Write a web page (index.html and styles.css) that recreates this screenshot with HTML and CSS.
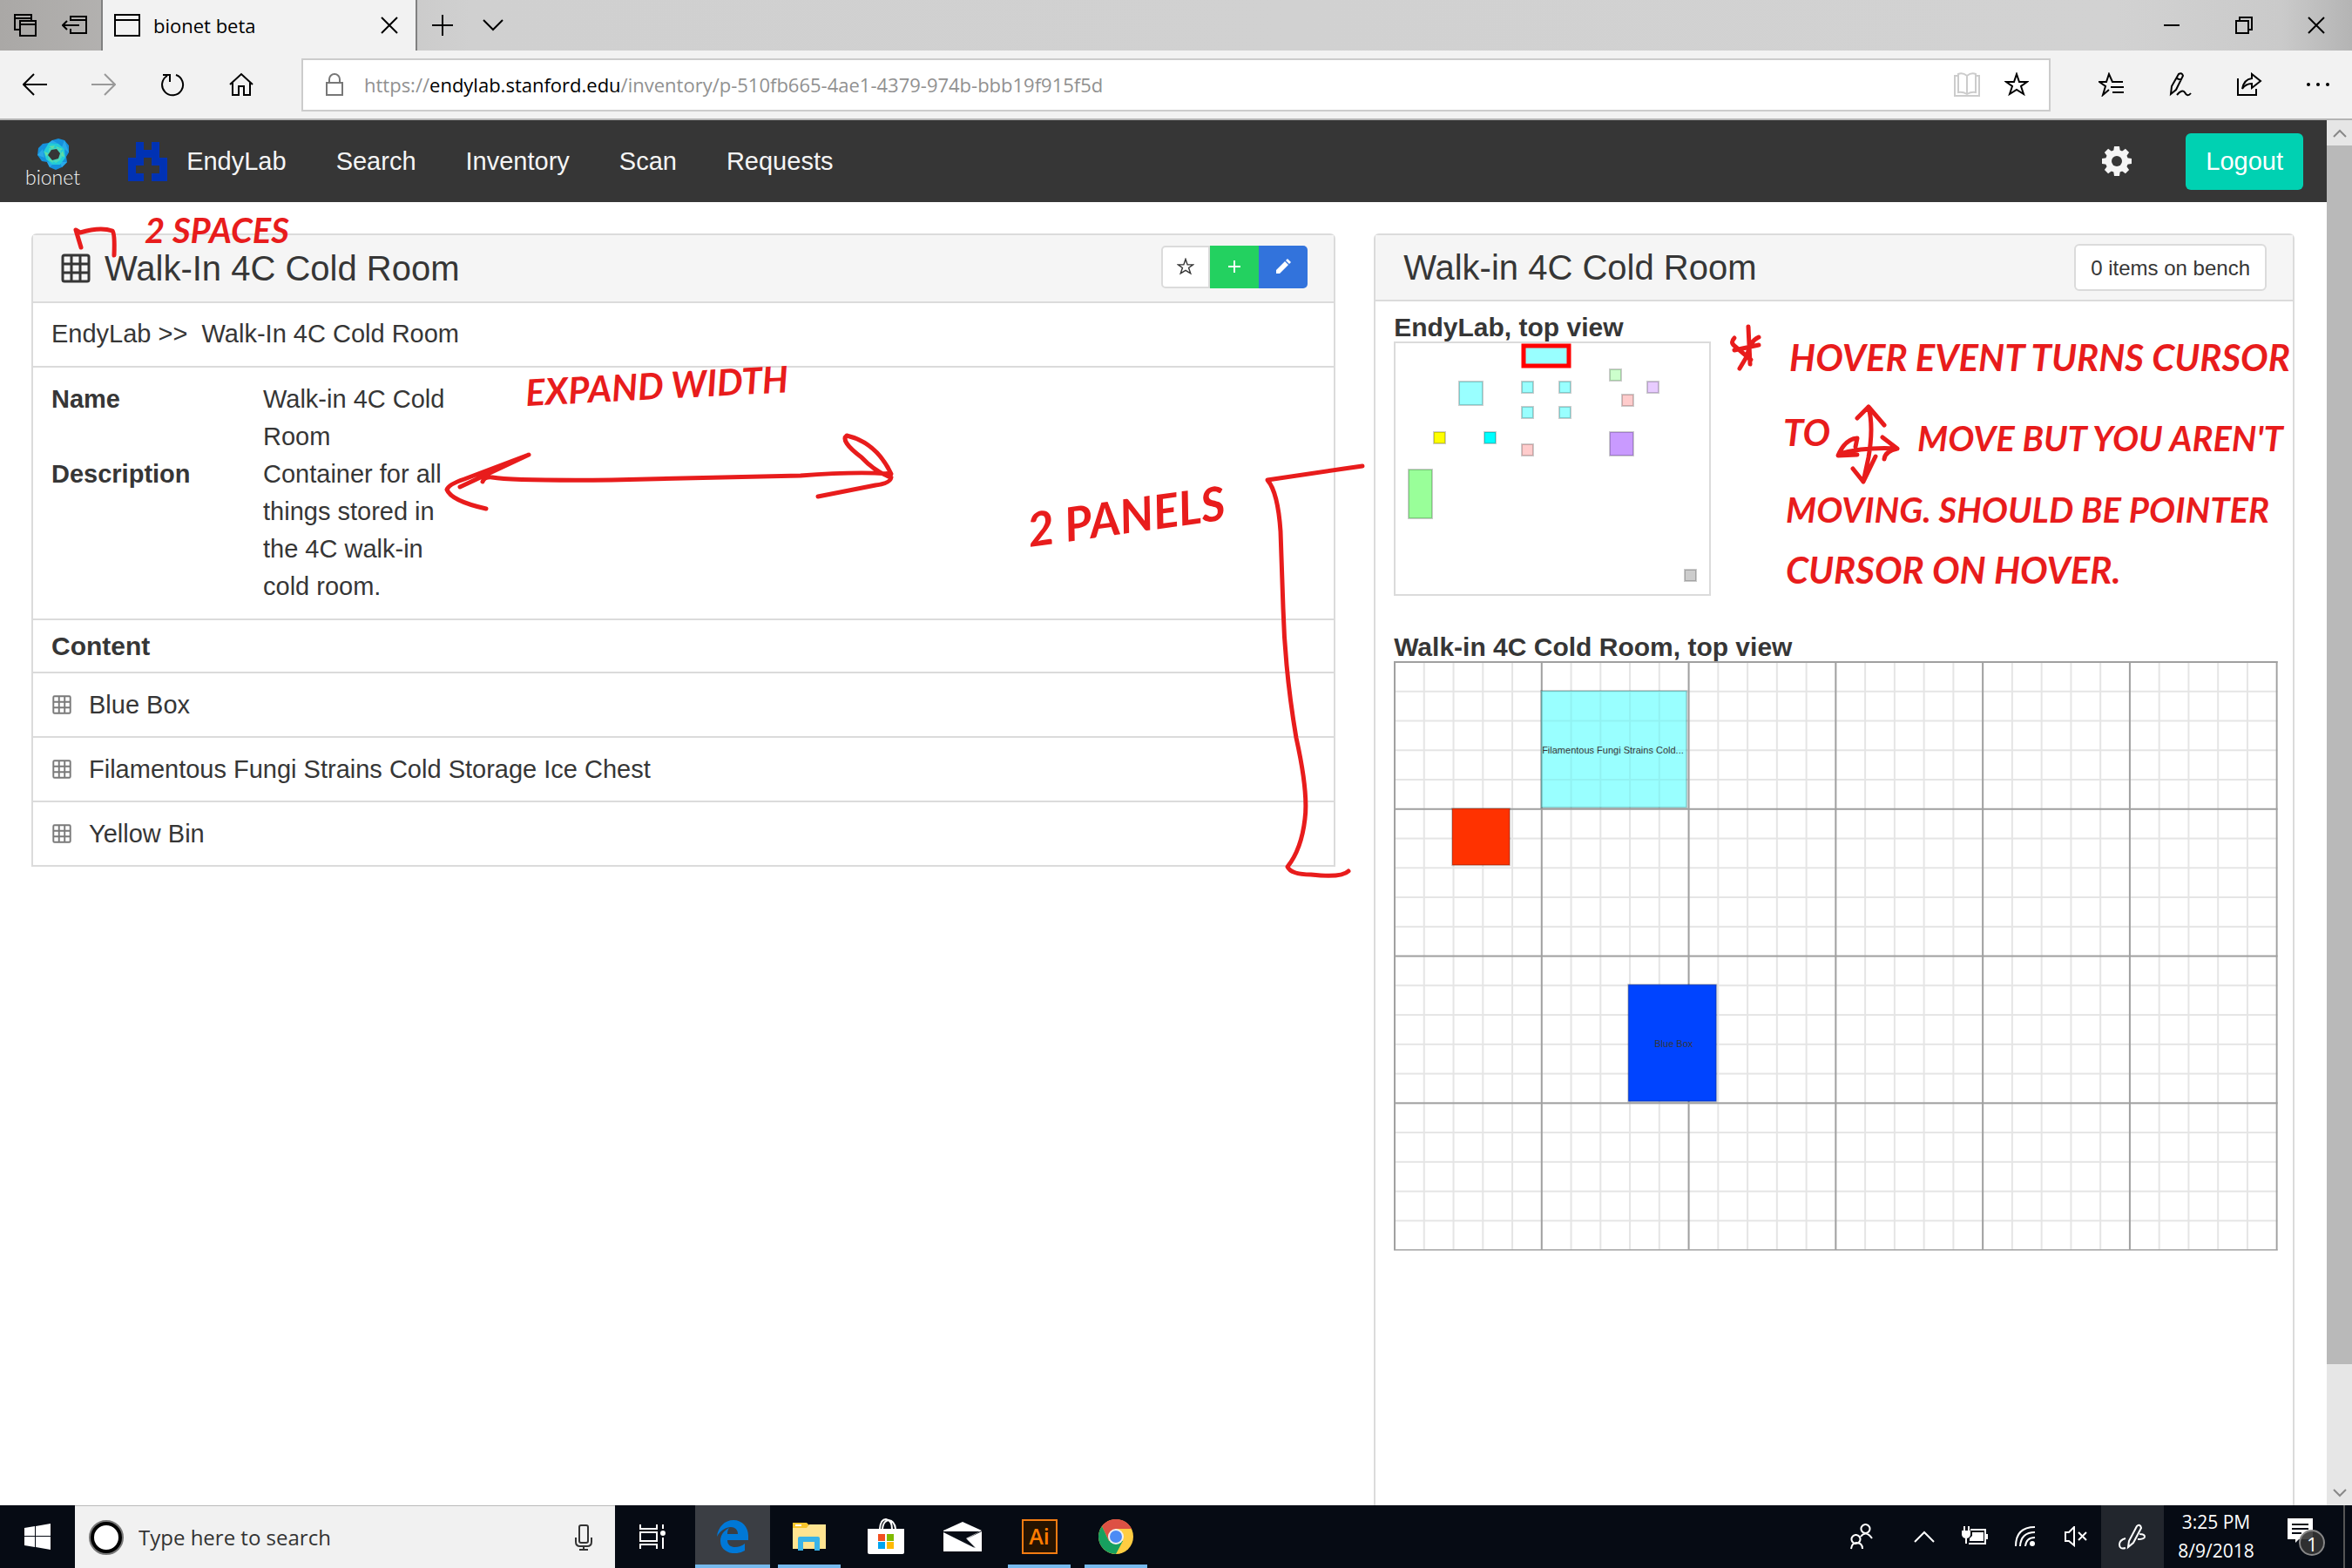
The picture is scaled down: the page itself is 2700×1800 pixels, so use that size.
FILE: index.html
```html
<!DOCTYPE html>
<html lang="en">
<head>
<meta charset="utf-8">
<title>bionet beta</title>
<link rel="stylesheet" href="styles.css">
</head>
<body>
<svg class="defs" aria-hidden="true">
  <symbol id="grid" viewBox="0 0 34 34"><path fill="none" stroke="currentColor" stroke-width="3" d="M4 2H30Q32 2 32 4V30Q32 32 30 32H4Q2 32 2 30V4Q2 2 4 2ZM12 2V32M22 2V32M2 12H32M2 22H32"/></symbol>
  <symbol id="star" viewBox="0 0 28 28"><path fill="none" stroke="currentColor" stroke-width="2" d="M14 2L17 11H26L19 16L22 25L14 20L6 25L9 16L2 11H11Z"/></symbol>
</svg>

<header class="tabs">
  <div class="tab-tools">
    <button class="bare" aria-label="Tabs set aside"><svg width="28" height="28"><path class="ln" d="M7 19H2V2H21V8M2 6H21M8 9H26V26H8ZM8 13H26"/></svg></button>
    <button class="bare" aria-label="Set tabs aside"><svg width="30" height="28"><path class="ln" d="M10 9V4H28V23H10V18M10 8H28M20 14H1M6 9L1 14L6 19"/></svg></button>
  </div>
  <div class="tab">
    <svg width="30" height="26"><path class="ln" d="M1 1H29V25H1ZM1 7H29"/></svg>
    <span class="tab-title">bionet beta</span>
    <button class="bare" aria-label="Close tab"><svg width="20" height="20"><path class="ln" d="M1 1L19 19M19 1L1 19"/></svg></button>
  </div>
  <button class="bare tab-add" aria-label="New tab"><svg width="24" height="24"><path class="ln" d="M12 0V24M0 12H24"/></svg></button>
  <button class="bare tab-add" aria-label="Tab previews"><svg width="24" height="14"><path class="ln" d="M1 1L12 12L23 1"/></svg></button>
  <div class="window-controls">
    <button class="bare" aria-label="Minimize"><svg width="20" height="20"><path class="ln" d="M1 10H19"/></svg></button>
    <button class="bare" aria-label="Restore"><svg width="20" height="20"><path class="ln" d="M1 5H15V19H1ZM5 5V1H19V15H15"/></svg></button>
    <button class="bare" aria-label="Close"><svg width="20" height="20"><path class="ln" d="M1 1L19 19M19 1L1 19"/></svg></button>
  </div>
</header>

<div class="toolbar">
  <button class="tool" aria-label="Back"><svg width="28" height="26"><path class="ln" d="M28 13H2M13 1L1 13L13 25"/></svg></button>
  <button class="tool dim" aria-label="Forward"><svg width="28" height="26"><path class="ln" d="M0 13H26M15 1L27 13L15 25"/></svg></button>
  <button class="tool" aria-label="Refresh"><svg width="28" height="28"><path class="ln" d="M18 3A12 12 0 1 1 8 4M3 3H11V11"/></svg></button>
  <button class="tool" aria-label="Home"><svg width="28" height="28"><path class="ln" d="M1 14L14 2L27 14M4 12V26H11V16H17V26H24V12"/></svg></button>
  <div class="address">
    <svg width="20" height="26"><path class="ln" stroke="#777" d="M1 11H19V25H1ZM4 11V7A6 6 0 0 1 16 7V11"/></svg>
    <a class="url" href="#">https://<b>endylab.stanford.edu</b>/inventory/p-510fb665-4ae1-4379-974b-bbb19f915f5d</a>
    <button class="addr-btn pale" aria-label="Reading view"><svg width="30" height="28"><path class="ln" d="M15 4Q10 0 5 2V23Q10 22 15 25Q20 22 25 23V2Q20 0 15 4V25M5 4H1V27H29V4H25"/></svg></button>
    <button class="addr-btn" aria-label="Add to favorites"><svg width="28" height="28"><use href="#star"/></svg></button>
  </div>
  <button class="tool" aria-label="Favorites"><svg width="30" height="28"><path class="ln" d="M28 11H16L12 2L9 11H1L8 16L5 26L12 20M14 17H29M16 23H29"/></svg></button>
  <button class="tool" aria-label="Add notes"><svg width="30" height="28"><path class="ln" d="M4 25L5 16L13 2Q17 0 18 4L10 20ZM11 7L16 9M11 26Q17 19 20 23Q23 29 27 24"/></svg></button>
  <button class="tool" aria-label="Share"><svg width="30" height="28"><path class="ln" d="M2 7V26H23V19M7 19Q9 8 18 7V2L28 10L18 18V13Q11 13 7 19Z"/></svg></button>
  <button class="tool" aria-label="More"><svg width="28" height="6"><circle cx="3" cy="3" r="2"/><circle cx="14" cy="3" r="2"/><circle cx="25" cy="3" r="2"/></svg></button>
</div>

<div class="viewport">
  <div class="page">
    <nav class="navbar">
      <a class="brand" href="#"><svg width="38" height="36" viewBox="0 0 38 36" aria-hidden="true">
        <path fill="#1590dc" d="M18 2L25 0L32 2L37 8L37 16L34 21L35 27L29 33L22 36L15 33L12 27L6 26L1 19L2 11L7 6L14 5Z"/>
        <path fill="#2aa9e8" d="M18 2L25 6L14 5ZM32 2L37 16L29 10ZM1 19L7 12L9 22ZM12 27L20 28L15 33ZM29 33L27 27L35 27Z"/>
        <path fill="#22cbd8" d="M14 5L25 6L32 12L33 22L27 30L18 30L11 24L8 15Z"/>
        <path fill="#5fdca4" d="M14 9L21 8L19 12ZM22 9L30 12L26 15ZM30 14L32 21L26 20ZM28 24L22 28L23 23ZM19 28L13 24L17 22ZM11 21L9 15L14 17Z"/>
        <path fill="#45d8bd" d="M14 11L27 11L29 22L22 28L13 23Z"/>
        <path fill="#363636" d="M17 13L23 12L27 17L25 23L18 25L13 19Z"/></svg>
        <span>bionet</span></a>
      <a class="nav-link lab" href="#"><svg width="45" height="45" viewBox="0 0 5 5" shape-rendering="crispEdges"><path fill="#0032b4" d="M1 0H2V1H3V0H4V2H5V5H3V4H4V3H1V4H2V5H0V2H1ZM2 2V3H3V2Z" fill-rule="evenodd"/></svg>EndyLab</a>
      <a class="nav-link" href="#">Search</a>
      <a class="nav-link" href="#">Inventory</a>
      <a class="nav-link" href="#">Scan</a>
      <a class="nav-link" href="#">Requests</a>
      <div class="nav-end">
        <button class="bare" aria-label="Settings"><svg width="36" height="36" viewBox="-18 -18 36 36"><g fill="#f5f5f5"><path id="t" d="M-4 -10L-3 -17H3L4 -10V10L3 17H-3L-4 10Z"/><use href="#t" transform="rotate(45)"/><use href="#t" transform="rotate(90)"/><use href="#t" transform="rotate(135)"/><circle r="13"/></g><circle r="6" fill="#363636"/></svg></button>
        <button class="logout">Logout</button>
      </div>
    </nav>

    <main class="columns">
      <section class="panel">
        <div class="panel-head">
          <h1 class="title"><svg width="34" height="34"><use href="#grid"/></svg>Walk-In 4C Cold Room</h1>
          <div class="actions">
            <button class="act" aria-label="Favorite"><svg width="20" height="20" viewBox="0 0 28 28"><use href="#star"/></svg></button>
            <button class="act green" aria-label="Add"><svg width="14" height="14"><path stroke="#fff" stroke-width="2" d="M7 0V14M0 7H14"/></svg></button>
            <button class="act blue" aria-label="Edit"><svg width="18" height="18"><path fill="#fff" d="M1 13L11 3L15 7L5 17H1ZM12 2L14 0L18 4L16 6Z"/></svg></button>
          </div>
        </div>
        <div class="crumbs"><a href="#">EndyLab</a> &gt;&gt; &nbsp;<a href="#">Walk-In 4C Cold Room</a></div>
        <dl class="facts">
          <dt>Name</dt><dd>Walk-in 4C Cold Room</dd>
          <dt>Description</dt><dd>Container for all things stored in the 4C walk-in cold room.</dd>
        </dl>
        <h2 class="subhead">Content</h2>
        <a class="item" href="#"><svg width="22" height="22"><use href="#grid"/></svg>Blue Box</a>
        <a class="item" href="#"><svg width="22" height="22"><use href="#grid"/></svg>Filamentous Fungi Strains Cold Storage Ice Chest</a>
        <a class="item" href="#"><svg width="22" height="22"><use href="#grid"/></svg>Yellow Bin</a>
      </section>

      <section class="panel tall">
        <div class="panel-head low">
          <h1 class="title">Walk-in 4C Cold Room</h1>
          <button class="bench">0 items on bench</button>
        </div>
        <div class="maps">
          <h2 class="map-title">EndyLab, top view</h2>
          <svg class="map" width="364" height="292" viewBox="0 0 364 292">
            <rect x="1" y="1" width="362" height="290" fill="#fff" stroke="#dbdbdb" stroke-width="2"/>
            <g stroke="#000" stroke-opacity=".2" stroke-width="2">
              <g fill="#9ff"><rect x="75" y="46" width="27" height="27"/><rect x="147" y="46" width="13" height="13"/><rect x="190" y="46" width="13" height="13"/><rect x="147" y="75" width="13" height="13"/><rect x="190" y="75" width="13" height="13"/></g>
              <rect x="248" y="32" width="13" height="13" fill="#cfc"/>
              <rect x="291" y="46" width="13" height="13" fill="#e8ccff"/>
              <rect x="262" y="61" width="13" height="13" fill="#fcc"/>
              <rect x="147" y="118" width="13" height="13" fill="#fcc"/>
              <rect x="46" y="104" width="13" height="13" fill="#ff0"/>
              <rect x="104" y="104" width="13" height="13" fill="#0ff"/>
              <rect x="248" y="104" width="27" height="27" fill="#c99aff"/>
              <rect x="17" y="147" width="27" height="56" fill="#9f9"/>
              <rect x="334" y="262" width="13" height="13" fill="#ccc"/>
            </g>
            <rect x="149" y="5" width="52" height="23" fill="#9ff" stroke="#f00" stroke-width="5"/>
          </svg>
          <h2 class="map-title">Walk-in 4C Cold Room, top view</h2>
          <svg class="room" viewBox="0 0 1014 676">
            <defs>
              <pattern id="minor" width="33.73" height="33.73" patternUnits="userSpaceOnUse"><path d="M0 1H34M1 0V34" stroke="#000" stroke-opacity=".1" stroke-width="2"/></pattern>
              <pattern id="major" width="168.65" height="168.65" patternUnits="userSpaceOnUse"><path d="M0 1H169M1 0V169" stroke="#000" stroke-opacity=".3" stroke-width="2"/></pattern>
            </defs>
            <rect x="169" y="34" width="167" height="134" fill="#9ff"/>
            <rect width="1014" height="676" fill="url(#minor)"/>
            <rect width="1014" height="676" fill="url(#major)"/>
            <g stroke="#000" stroke-opacity=".2" stroke-width="2">
              <rect x="169" y="34" width="167" height="134" fill="#9ff" fill-opacity=".5"/>
              <rect x="67" y="169" width="66" height="65" fill="#ff3200"/>
              <rect x="269" y="371" width="101" height="134" fill="#0044ff"/>
            </g>
            <g class="room-label"><text x="170" y="106">Filamentous Fungi Strains Cold...</text><text x="299" y="443">Blue Box</text></g>
          </svg>
        </div>
      </section>
    </main>
  </div>
  <div class="scrollbar" aria-hidden="true">
    <span class="arrow"><svg width="16" height="10"><path class="ln" stroke="#888" d="M1 9L8 2L15 9"/></svg></span>
    <span class="thumb"></span>
    <span class="arrow last"><svg width="16" height="10"><path class="ln" stroke="#888" d="M1 1L8 8L15 1"/></svg></span>
  </div>
</div>

<footer class="taskbar">
  <button class="start" aria-label="Start"><svg width="30" height="30"><path fill="#fff" d="M0 5L12 3V14H0ZM13 3L30 0V14H13ZM0 15H12V27L0 25ZM13 15H30V30L13 27Z"/></svg></button>
  <label class="search">
    <svg width="40" height="40"><circle cx="20" cy="20" r="18" fill="none" stroke="#777" stroke-width="4"/><circle cx="20" cy="20" r="16" fill="#fff" stroke="#000" stroke-width="4"/></svg>
    <input type="text" placeholder="Type here to search" aria-label="Search">
    <svg width="20" height="30"><path class="ln" stroke="#333" d="M5 3Q5 1 7 1H13Q15 1 15 3V19Q15 21 13 21H7Q5 21 5 19ZM1 15V20Q1 25 6 25H14Q19 25 19 20V15M10 25V29M5 29H15"/></svg>
  </label>
  <button class="task" aria-label="Task view"><svg width="30" height="28"><path class="ln wt" d="M1 0V5H20V0M1 9H20V19H1ZM1 28V23H20V28M27 0V5M27 15V28"/><circle cx="27" cy="10" r="3" fill="#fff"/></svg></button>
  <button class="task open current" aria-label="Edge"><svg width="36" height="38"><path fill="#0078d7" d="M0 19C1 8 9 0 19 0C29 0 36 8 36 18V23H12C12 33 25 33 32 27V35C20 42 4 37 4 24C4 17 8 12 14 9C12 12 12 14 12 16H24C24 5 8 5 0 19Z"/></svg></button>
  <button class="task open" aria-label="File Explorer"><svg width="38" height="32"><path fill="#f8c52c" d="M0 0H16L19 3V8H0Z"/><path fill="#fff" d="M3 2H10V4H3Z"/><path fill="#ffe491" d="M0 6H16L19 2H38V30H0Z"/><path fill="#39b3e8" d="M6 18Q6 16 8 16H29Q31 16 31 18V32H25V22H12V32H6Z"/></svg></button>
  <button class="task" aria-label="Store"><svg width="42" height="42"><path class="ln wt" d="M14 12Q15 1 21 1Q28 2 28 12M17 12Q18 3 24 2Q31 3 32 12"/><path fill="#fff" d="M0 12H42V39Q42 41 40 41H2Q0 41 0 39Z"/><path fill="#f25022" d="M12 18H20V26H12Z"/><path fill="#7fba00" d="M22 18H30V26H22Z"/><path fill="#00a4ef" d="M12 27H20V35H12Z"/><path fill="#ffb900" d="M22 27H30V35H22Z"/></svg></button>
  <button class="task" aria-label="Mail"><svg width="44" height="34"><path fill="#fff" d="M0 10L22 0L44 10L26 20L36 29L3 11H0ZM0 12L36 30L26 20L44 11V34H0Z"/><path fill="#060b14" d="M2 11H42L26 19L37 30Z"/></svg></button>
  <button class="task open" aria-label="Illustrator"><span class="ai">Ai</span></button>
  <button class="task open" aria-label="Chrome"><svg width="40" height="40" viewBox="-20 -20 40 40"><circle r="20" fill="#ffcd42"/><path fill="#dd5144" d="M-16 -12A20 20 0 0 1 18 -9H0L-8 5Z"/><path fill="#17a05f" d="M-16 -12A20 20 0 0 0 0 20L8 5L-8 5Z"/><circle r="9" fill="#f1f1f1"/><circle r="7" fill="#4c8bf5"/></svg></button>
  <div class="tray">
    <button class="tray-btn wide" aria-label="People"><svg width="26" height="30"><path class="ln wt" d="M18 1A5 5 0 1 1 17 1ZM12 15Q18 7 25 17M7 13A5 5 0 1 1 6 13ZM1 29Q2 22 7 22Q14 22 14 29"/></svg></button>
    <button class="tray-btn" aria-label="Hidden icons"><svg width="24" height="14"><path class="ln wt" d="M1 13L12 2L23 13"/></svg></button>
    <button class="tray-btn" aria-label="Battery"><svg width="30" height="24"><path class="ln wt" d="M10 4H27V20H8M29 9V15M3 0V5M8 0V5M5 14V20"/><path fill="#fff" d="M0 5H10V10Q9 14 5 14Q1 14 0 10ZM12 7H25V17H9V14L12 11Z"/></svg></button>
    <button class="tray-btn" aria-label="Network"><svg width="24" height="24"><path class="ln wt" d="M1 23Q1 1 23 1M6 23Q7 7 23 7M12 23Q13 13 23 13"/><circle cx="20" cy="20" r="3" fill="#fff"/></svg></button>
    <button class="tray-btn" aria-label="Volume"><svg width="26" height="24"><path class="ln wt" d="M1 7H5L11 1V22L5 17H1ZM16 7L25 16M25 7L16 16"/></svg></button>
    <button class="tray-btn ink" aria-label="Windows Ink"><svg width="32" height="30"><path class="ln wt" d="M11 27L12 20L21 3Q25 0 26 5L17 22ZM8 17Q1 19 1 24Q1 30 8 28M24 12Q30 12 30 15Q30 18 22 18"/></svg></button>
    <div class="clock"><time>3:25 PM</time><time>8/9/2018</time></div>
    <button class="notices" aria-label="Notifications"><svg width="46" height="46"><path fill="#fff" d="M0 2H29V26H13L9 30V26H0Z"/><path stroke="#060b14" stroke-width="2" d="M5 9H24M5 14H24M5 19H16"/><circle cx="28" cy="30" r="14" fill="#333" fill-opacity=".9" stroke="#888" stroke-width="2"/></svg><span class="count">1</span></button>
  </div>
</footer>

<svg class="markup" width="2700" height="1800">
  <g class="ink-line">
    <path d="M93 284L87 264L92 267Q115 260 129 265Q132 268 131 293"/>
    <path d="M558 584Q518 575 513 562Q515 556 533 550L607 522L528 559M554 553Q556 547 565 548Q590 552 702 551L919 546Q982 541 1023 544Q1006 508 972 500Q964 506 989 525Q1005 542 1023 548Q1022 555 1005 557L939 570"/>
    <path d="M1564 535L1543 538L1455 551Q1467 565 1470 610L1473 698Q1475 770 1488 847Q1502 910 1498 940Q1494 975 1478 995Q1482 1004 1505 1004Q1540 1008 1548 1000"/>
    <path d="M2007 375L2009 418M1991 388Q1986 393 1991 397L2010 413M2019 387Q2008 392 2006 408L1997 423M2019 396L1991 402"/>
    <path d="M2145 467Q2151 490 2145 525L2139 553M2132 480L2145 467L2163 488M2127 538L2139 553L2153 524M2112 521Q2140 513 2178 515M2132 522L2110 523Q2118 504 2132 503L2130 513M2161 502L2178 515Q2164 518 2163 527"/>
  </g>
  <g class="ink-text">
    <text class="small" x="166" y="279">2 SPACES</text>
    <text x="604" y="466" transform="rotate(-3 604 466)">EXPAND WIDTH</text>
    <text class="large" x="1182" y="628" transform="rotate(-8 1182 628)">2 PANELS</text>
    <text x="2054" y="426">HOVER EVENT TURNS CURSOR</text>
    <text x="2047" y="512">TO</text>
    <text class="small" x="2201" y="518">MOVE BUT YOU AREN'T</text>
    <text class="small" x="2050" y="600">MOVING. SHOULD BE POINTER</text>
    <text x="2050" y="670">CURSOR ON HOVER.</text>
  </g>
</svg>
</body>
</html>
```
FILE: styles.css
```css
* { box-sizing: border-box; }
body {
  margin: 0;
  height: 100vh;
  display: flex;
  flex-direction: column;
  overflow: hidden;
  position: relative;
  background: #fff;
  color: #363636;
  font: 29px/43px "Liberation Sans", Arial, sans-serif;
}
a { color: inherit; text-decoration: none; }
button { font: inherit; color: inherit; border: 0; padding: 0; background: none; display: flex; align-items: center; justify-content: center; }
h1, h2, dl, dd { margin: 0; }
svg { display: block; flex: none; }
.defs { position: absolute; width: 0; height: 0; }
.ln { fill: none; stroke: currentColor; stroke-width: 2; }
.ln[stroke="#777"] { stroke: #777; }
.ln[stroke="#888"] { stroke: #888; }
.ln[stroke="#333"] { stroke: #333; }
.ln.wt { stroke: #fff; }

.tabs {
  flex: none;
  display: flex;
  align-items: center;
  height: 58px;
  color: #000;
  background: linear-gradient(90deg, #aaa8a6, #d0d0d0 20%, #d2d2d2 90%, #cacaca 97%, #b4b4b4);
}
.tab-tools { width: 116px; display: flex; justify-content: space-between; padding: 0 15px; }
.tab {
  width: 363px;
  align-self: stretch;
  display: flex;
  align-items: center;
  padding: 0 20px 0 13px;
  background: #f2f2f2;
  border: solid #808080;
  border-width: 0 2px;
}
.tab-title { flex: 1; margin-left: 15px; font: 22px/30px "Open Sans", sans-serif; }
.tab-add { width: 58px; }
.window-controls { margin-left: auto; display: flex; }
.window-controls button { width: 83px; }

.toolbar {
  flex: none;
  display: flex;
  align-items: center;
  height: 80px;
  color: #000;
  background: #f2f2f2;
  border-bottom: 2px solid #b4b4b4;
}
.tool { width: 79px; height: 60px; }
.tool.dim { color: #999; }
.address {
  flex: 1;
  display: flex;
  align-items: center;
  height: 61px;
  margin: 0 30px;
  padding: 0 9px 0 26px;
  background: #fff;
  border: 2px solid #ccc;
}
.url { flex: 1; margin-left: 24px; font: 22px/32px "Open Sans", sans-serif; color: #919191; }
.url b { font-weight: 400; color: #000; }
.addr-btn { width: 57px; }
.pale { color: #ccc; }

.viewport { flex: 1; min-height: 0; display: flex; }
.page { flex: 1; display: flex; flex-direction: column; overflow: hidden; }
.navbar { flex: none; display: flex; align-items: center; height: 94px; padding: 0 27px 0 29px; background: #363636; color: #f5f5f5; }
.brand { display: flex; flex-direction: column; align-items: center; margin-right: 26px; font: 300 23px/16px Lato, sans-serif; }
.nav-link { padding: 0 28px 0 29px; }
.lab { display: flex; align-items: center; gap: 22px; }
.nav-end { margin-left: auto; display: flex; align-items: center; gap: 61px; }
.logout { height: 65px; padding: 0 23px; border-radius: 6px; background: #00d1b2; color: #fff; }

.columns { flex: 1; min-height: 0; display: grid; grid-template-columns: 17fr 12fr; gap: 44px; padding: 36px 37px 0 36px; }
.panel { align-self: start; border: 2px solid #dbdbdb; border-radius: 6px 6px 0 0; }
.panel.tall { align-self: stretch; border-bottom: 0; }
.panel-head { display: flex; align-items: center; justify-content: space-between; height: 78px; padding: 0 30px 0 32px; background: #f5f5f5; border-bottom: 2px solid #dbdbdb; }
.panel-head.low { height: 76px; }
.title { display: flex; align-items: center; gap: 16px; font-size: 40px; font-weight: 400; }
.actions { display: flex; margin-bottom: 4px; }
.act { width: 56px; height: 49px; background: #fff; border: 2px solid #dbdbdb; border-radius: 5px 0 0 5px; }
.act.green { background: #23d160; border: 0; border-radius: 0; }
.act.blue { background: #3273dc; border: 0; border-radius: 0 5px 5px 0; }
.crumbs { padding: 14px 21px 15px; border-bottom: 2px solid #dbdbdb; }
.facts { display: grid; grid-template-columns: 243px 216px; padding: 15px 21px; border-bottom: 2px solid #dbdbdb; }
.facts dt { font-weight: 700; }
.subhead { padding: 8px 21px; font-size: 30px; border-bottom: 2px solid #dbdbdb; }
.item { display: flex; align-items: center; gap: 20px; height: 74px; padding: 0 22px; border-bottom: 2px solid #dbdbdb; }
.item:last-child { height: 72px; border-bottom: 0; }
.item svg { color: #7a7a7a; }
.bench { height: 54px; padding: 0 17px; font-size: 24px; background: #fff; border: 2px solid #dbdbdb; border-radius: 6px; }
.maps { padding: 13px 17px 0 21px; }
.map-title { font-size: 30px; line-height: 33px; white-space: nowrap; }
.map { margin-bottom: 42px; }
.room { width: 100%; }
.room-label { font-size: 11px; fill: #363636; }

.scrollbar { flex: none; width: 29px; display: flex; flex-direction: column; background: #e6e6e6; }
.arrow { height: 29px; display: flex; align-items: center; justify-content: center; }
.thumb { flex: 0 0 88%; background: #b9b9b9; }
.arrow.last { margin-top: auto; }

.taskbar { flex: none; display: flex; height: 72px; background: #060b14; color: #fff; }
.start { width: 86px; }
.search { width: 620px; display: flex; align-items: center; padding: 0 26px 0 16px; background: #f1f1f1; border-top: 1px solid #bbb; }
.search input { flex: 1; min-width: 0; margin-left: 17px; padding: 0; border: 0; background: none; font: 24px/36px "Open Sans", sans-serif; }
.search input::placeholder { color: #333; opacity: 1; }
.task { width: 86px; margin-right: 2px; border-bottom: 4px solid transparent; border-top: 4px solid transparent; }
.task.open { background: linear-gradient(#76b9ed, #76b9ed) bottom / 72px 4px no-repeat border-box; }
.task.current { margin-left: 4px; background: #3b3e44; border-color: #3b3e44 transparent #76b9ed; }
.ai { width: 41px; height: 40px; border: 2px solid #f37c12; background: #261300; color: #ff7c00; font: 600 25px/35px "Open Sans", sans-serif; }
.tray { margin-left: auto; display: flex; align-items: center; }
.tray-btn { width: 58px; height: 72px; }
.tray-btn.wide { width: 86px; }
.tray-btn.ink { width: 72px; background: #22262d; }
.clock { width: 120px; display: flex; flex-direction: column; align-items: center; font: 21px/33px "Open Sans", sans-serif; }
.notices { position: relative; width: 88px; height: 72px; padding-left: 4px; border-right: 2px solid #555; margin-right: 8px; }
.count { position: absolute; left: 44px; top: 29px; font: 22px/30px "Open Sans", sans-serif; }

.markup { position: absolute; left: 0; top: 0; pointer-events: none; }
.ink-line { fill: none; stroke: #e81c1c; stroke-width: 5; stroke-linecap: round; stroke-linejoin: round; }
.ink-text { fill: #e81c1c; font: italic 700 42px Lato, sans-serif; }
.small { font-size: 40px; }
.large { font-size: 54px; }
```
